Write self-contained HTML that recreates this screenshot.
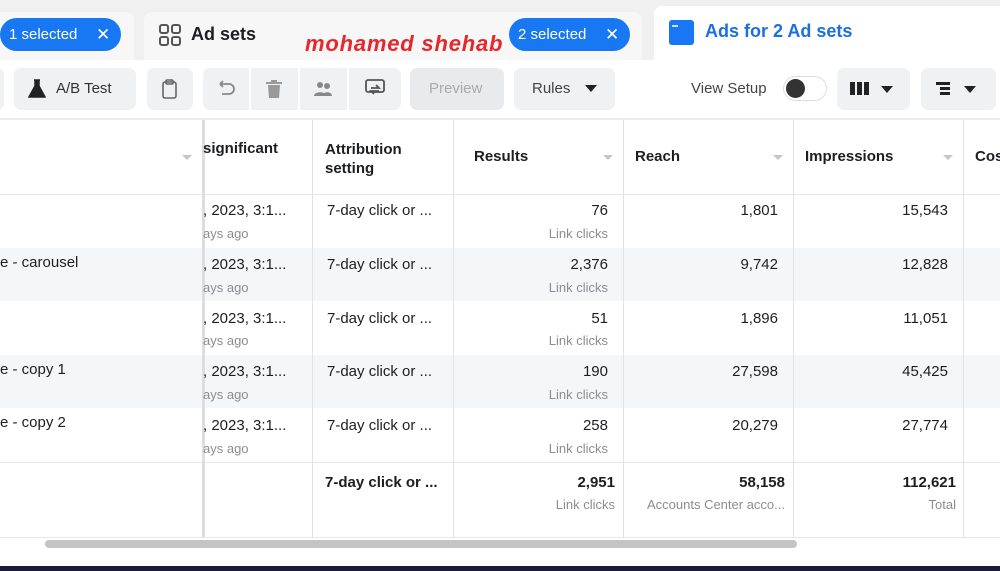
<!DOCTYPE html>
<html><head><meta charset="utf-8"><style>
*{margin:0;padding:0;box-sizing:border-box}
body{width:1000px;height:571px;overflow:hidden;background:#fff;font-family:"Liberation Sans",sans-serif;color:#1c1e21;position:relative}
.a{position:absolute}
.pill{position:absolute;background:#1877f2;color:#fff;border-radius:17px;height:33px;font-size:15px;line-height:33px;padding-left:9px}
.btn{position:absolute;top:68px;height:42px;background:#f0f1f3;border-radius:7px}
.t{position:absolute;font-size:15px;white-space:nowrap}
.s{position:absolute;font-size:13px;color:#8a8d91;white-space:nowrap}
.r{text-align:right}
.vl{position:absolute;top:120px;height:417px;width:1px;background:#e2e3e5}
.hl{position:absolute;left:0;width:1000px;height:1px;background:#e4e6e8}
.th{position:absolute;font-size:15px;font-weight:bold;white-space:nowrap}
.ar{position:absolute;width:0;height:0;border-left:5px solid transparent;border-right:5px solid transparent;border-top:5px solid #c4c6c9}
</style></head><body>
<div class="a" style="left:0;top:0;width:1000px;height:60px;background:#f0f0f0"></div>
<div class="a" style="left:0;top:12px;width:134px;height:48px;background:#f7f7f7;border-radius:0 8px 0 0"></div>
<div class="a" style="left:144px;top:12px;width:498px;height:48px;background:#f7f7f7;border-radius:8px 8px 0 0"></div>
<div class="a" style="left:654px;top:6px;width:346px;height:54px;background:#fff;border-radius:8px 0 0 0"></div>
<div class="pill" style="left:0;top:18px;width:121px">1 selected<span style="position:absolute;left:96px;font-size:17px">✕</span></div>
<svg class="a" style="left:159px;top:24px" width="22" height="22" viewBox="0 0 22 22" fill="none" stroke="#555" stroke-width="2"><rect x="1" y="1" width="8" height="8" rx="2"/><rect x="13" y="1" width="8" height="8" rx="2"/><rect x="1" y="13" width="8" height="8" rx="2"/><rect x="13" y="13" width="8" height="8" rx="2"/></svg>
<div class="t" style="left:191px;top:24px;font-size:18px;font-weight:bold">Ad sets</div>
<div class="t" style="left:305px;top:31px;font-size:22px;font-weight:bold;font-style:italic;color:#e8262b;letter-spacing:0.8px">mohamed shehab</div>
<div class="pill" style="left:509px;top:18px;width:121px">2 selected<span style="position:absolute;left:96px;font-size:17px">✕</span></div>
<div class="a" style="left:669px;top:20px;width:25px;height:25px;background:#1877f2;border-radius:3px"><div class="a" style="left:3px;top:5px;width:6px;height:2px;background:#cfe0fb"></div></div>
<div class="t" style="left:705px;top:21px;font-size:18px;font-weight:bold;color:#1b6fe0">Ads for 2 Ad sets</div>

<div class="btn" style="left:-10px;width:14px"></div>
<div class="btn" style="left:14px;width:122px"></div>
<svg class="a" style="left:28px;top:79px" width="18" height="20" viewBox="0 0 18 20"><path d="M6 1h6M7 1v6L1 18h16L11 7V1" fill="#222" stroke="#222" stroke-width="1.5"/></svg>
<div class="t" style="left:56px;top:80px;color:#333">A/B Test</div>
<div class="btn" style="left:147px;width:46px"></div>
<svg class="a" style="left:161px;top:79px" width="17" height="21" viewBox="0 0 17 21" fill="none" stroke="#666" stroke-width="1.6"><rect x="2" y="3" width="13" height="16" rx="2"/><rect x="5" y="1" width="7" height="4" rx="1"/></svg>
<div class="btn" style="left:203px;width:198px"></div>
<div class="a" style="left:249px;top:68px;width:2px;height:42px;background:#fff"></div>
<div class="a" style="left:298px;top:68px;width:2px;height:42px;background:#fff"></div>
<div class="a" style="left:347px;top:68px;width:2px;height:42px;background:#fff"></div>
<svg class="a" style="left:216px;top:79px" width="20" height="20" viewBox="0 0 20 20" fill="none" stroke="#888" stroke-width="1.8"><path d="M4 5h9a5 5 0 010 10H6M4 5l3-3M4 5l3 3"/></svg>
<svg class="a" style="left:265px;top:79px" width="18" height="20" viewBox="0 0 18 20" fill="#999"><rect x="1" y="3" width="16" height="2"/><rect x="6" y="1" width="6" height="2"/><path d="M3 6h12l-1 13H4z"/></svg>
<svg class="a" style="left:313px;top:80px" width="20" height="18" viewBox="0 0 20 18" fill="#888"><circle cx="7" cy="5" r="3"/><circle cx="14" cy="6" r="3"/><path d="M1 16c0-5 12-5 12 0zM9 16c1-5 10-5 10 0z"/></svg>
<svg class="a" style="left:364px;top:78px" width="22" height="20" viewBox="0 0 22 20" fill="none" stroke="#555" stroke-width="1.8"><rect x="2" y="2" width="18" height="12" rx="2"/><path d="M7 10h8l-3-3M15 13H7l3 3"/></svg>
<div class="btn" style="left:410px;width:94px;background:#e9eaec"></div>
<div class="t" style="left:429px;top:80px;color:#a8abb0">Preview</div>
<div class="btn" style="left:514px;width:101px"></div>
<div class="t" style="left:532px;top:80px;color:#444">Rules</div>
<div class="a" style="left:585px;top:85px;border-left:6px solid transparent;border-right:6px solid transparent;border-top:7px solid #222"></div>
<div class="t" style="left:691px;top:80px;color:#444">View Setup</div>
<div class="a" style="left:783px;top:76px;width:44px;height:25px;border-radius:13px;background:#fff;border:1px solid #ddd"><div class="a" style="left:2px;top:2px;width:19px;height:19px;border-radius:50%;background:#333"></div></div>
<div class="btn" style="left:837px;width:73px"></div>
<div class="a" style="left:850px;top:82px;width:5px;height:13px;background:#222"></div>
<div class="a" style="left:857px;top:82px;width:5px;height:13px;background:#222"></div>
<div class="a" style="left:864px;top:82px;width:5px;height:13px;background:#222"></div>
<div class="a" style="left:881px;top:86px;border-left:6px solid transparent;border-right:6px solid transparent;border-top:7px solid #222"></div>
<div class="btn" style="left:921px;width:75px"></div>
<div class="a" style="left:936px;top:82px;width:14px;height:3px;background:#222"></div>
<div class="a" style="left:940px;top:87px;width:10px;height:3px;background:#222"></div>
<div class="a" style="left:940px;top:92px;width:10px;height:3px;background:#222"></div>
<div class="a" style="left:964px;top:86px;border-left:6px solid transparent;border-right:6px solid transparent;border-top:7px solid #222"></div>

<div class="hl" style="top:118px;background:#ececec;height:2px"></div>
<div class="a" style="left:0;top:248px;width:1000px;height:53px;background:#f5f6f7"></div>
<div class="a" style="left:0;top:355px;width:1000px;height:53px;background:#f5f6f7"></div>
<div class="hl" style="top:194px"></div>
<div class="hl" style="top:462px"></div>
<div class="hl" style="top:537px"></div>
<div class="vl" style="left:202px;width:3px;background:#dcdddf"></div>
<div class="vl" style="left:312px"></div>
<div class="vl" style="left:453px"></div>
<div class="vl" style="left:623px"></div>
<div class="vl" style="left:793px"></div>
<div class="vl" style="left:963px"></div>

<div class="ar" style="left:182px;top:155px"></div>
<div class="th" style="left:203px;top:140px">significant</div>
<div class="th" style="left:325px;top:140px;line-height:19px">Attribution<br>setting</div>
<div class="th" style="left:474px;top:148px">Results</div><div class="ar" style="left:603px;top:155px"></div>
<div class="th" style="left:635px;top:148px">Reach</div><div class="ar" style="left:773px;top:155px"></div>
<div class="th" style="left:805px;top:148px">Impressions</div><div class="ar" style="left:943px;top:155px"></div>
<div class="th" style="left:975px;top:148px">Cos</div>

<div class="t" style="left:0;top:254px">e - carousel</div>
<div class="t" style="left:0;top:361px">e - copy 1</div>
<div class="t" style="left:0;top:414px">e - copy 2</div>

<div class="t" style="left:203px;top:202px">, 2023, 3:1...</div><div class="s" style="left:203px;top:226px">ays ago</div>
<div class="t" style="left:203px;top:256px">, 2023, 3:1...</div><div class="s" style="left:203px;top:280px">ays ago</div>
<div class="t" style="left:203px;top:310px">, 2023, 3:1...</div><div class="s" style="left:203px;top:333px">ays ago</div>
<div class="t" style="left:203px;top:363px">, 2023, 3:1...</div><div class="s" style="left:203px;top:387px">ays ago</div>
<div class="t" style="left:203px;top:417px">, 2023, 3:1...</div><div class="s" style="left:203px;top:441px">ays ago</div>

<div class="t" style="left:327px;top:202px">7-day click or ...</div>
<div class="t" style="left:327px;top:256px">7-day click or ...</div>
<div class="t" style="left:327px;top:310px">7-day click or ...</div>
<div class="t" style="left:327px;top:363px">7-day click or ...</div>
<div class="t" style="left:327px;top:417px">7-day click or ...</div>
<div class="t" style="left:325px;top:474px;font-weight:bold">7-day click or ...</div>

<div class="t r" style="right:392px;top:202px">76</div><div class="s" style="right:392px;top:226px">Link clicks</div>
<div class="t r" style="right:392px;top:256px">2,376</div><div class="s" style="right:392px;top:280px">Link clicks</div>
<div class="t r" style="right:392px;top:310px">51</div><div class="s" style="right:392px;top:333px">Link clicks</div>
<div class="t r" style="right:392px;top:363px">190</div><div class="s" style="right:392px;top:387px">Link clicks</div>
<div class="t r" style="right:392px;top:417px">258</div><div class="s" style="right:392px;top:441px">Link clicks</div>
<div class="t r" style="right:385px;top:474px;font-weight:bold">2,951</div><div class="s" style="right:385px;top:497px">Link clicks</div>

<div class="t" style="right:222px;top:202px">1,801</div>
<div class="t" style="right:222px;top:256px">9,742</div>
<div class="t" style="right:222px;top:310px">1,896</div>
<div class="t" style="right:222px;top:363px">27,598</div>
<div class="t" style="right:222px;top:417px">20,279</div>
<div class="t" style="right:215px;top:474px;font-weight:bold">58,158</div><div class="s" style="right:215px;top:497px">Accounts Center acco...</div>

<div class="t" style="right:52px;top:202px">15,543</div>
<div class="t" style="right:52px;top:256px">12,828</div>
<div class="t" style="right:52px;top:310px">11,051</div>
<div class="t" style="right:52px;top:363px">45,425</div>
<div class="t" style="right:52px;top:417px">27,774</div>
<div class="t" style="right:44px;top:474px;font-weight:bold">112,621</div><div class="s" style="right:44px;top:497px">Total</div>

<div class="a" style="left:45px;top:540px;width:752px;height:8px;border-radius:4px;background:#c4c4c4"></div>
<div class="a" style="left:0;top:566px;width:1000px;height:5px;background:#1c1a3a"></div>
</body></html>
